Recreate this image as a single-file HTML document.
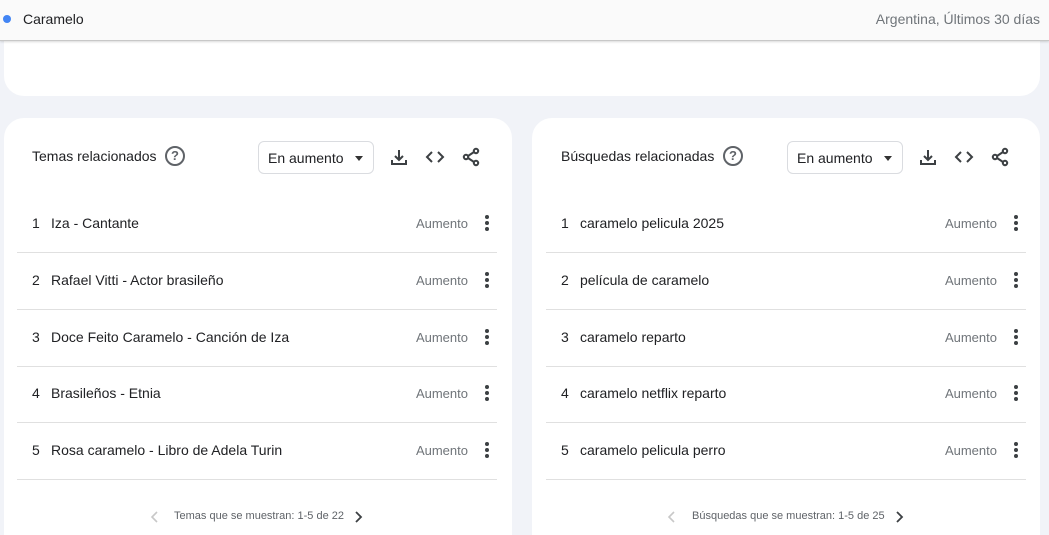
<!DOCTYPE html>
<html><head><meta charset="utf-8"><style>
*{margin:0;padding:0;box-sizing:border-box}
html,body{width:1049px;height:535px;overflow:hidden}
body{background:#f1f3f8;font-family:"Liberation Sans",Arial,sans-serif;color:#202124;position:relative}
.top{position:absolute;left:0;top:0;width:1049px;height:41px;background:#fafafa;border-bottom:1px solid #c8c8c8;box-shadow:0 1px 2px rgba(0,0,0,.15);z-index:2}
.top .dot{position:absolute;left:3px;top:15px;width:8px;height:8px;border-radius:50%;background:#4285f4}
.top .t{position:absolute;left:23px;top:11px;font-size:14px}
.top .r{position:absolute;right:9px;top:11px;font-size:14px;color:#70757a}
.hcard{position:absolute;left:4px;top:20px;width:1036px;height:76px;background:#fff;border-radius:0 0 20px 20px}
.card{position:absolute;top:118px;width:508px;height:417px;background:#fff;border-radius:20px 20px 0 0}
.title{position:absolute;top:148px;font-size:14px}
.help{position:absolute;top:146px;width:20px;height:20px;border:2px solid #5f6368;border-radius:50%;font-size:13px;font-weight:bold;color:#5f6368;text-align:center;line-height:16px}
.dd{position:absolute;top:141px;height:33px;border:1px solid #dadce0;border-radius:6px;font-size:14px;padding:8px 0 0 9px}
.dd:after{content:"";position:absolute;right:10px;top:14px;border:4px solid transparent;border-top:5px solid #333;border-bottom:0}
.ic{position:absolute;top:147px}
.row{position:absolute;height:57px;border-bottom:1px solid #e0e0e0;font-size:14px}
.row .n{position:absolute;left:15px;top:19px}
.row .l{position:absolute;left:34px;top:19px}
.row .a{position:absolute;right:29px;top:20px;font-size:13px;color:#70757a}
.row .m{position:absolute;right:8px;top:19px;width:4px}
.row .m i{display:block;width:4px;height:4px;border-radius:50%;background:#3c4043;margin-bottom:2px}
.pg{position:absolute;top:510px;font-size:11px;color:#5f6368}
</style></head><body>
<div class="top"><div class="dot"></div><div class="t">Caramelo</div><div class="r">Argentina, Últimos 30 días</div></div>
<div class="hcard"></div>

<div class="card" style="left:4px"></div>
<div class="card" style="left:532px"></div>

<div class="title" style="left:32px">Temas relacionados</div>
<div class="help" style="left:165px">?</div>
<div class="dd" style="left:258px;width:116px">En aumento</div>
<div class="title" style="left:561px">Búsquedas relacionadas</div>
<div class="help" style="left:723px">?</div>
<div class="dd" style="left:787px;width:116px">En aumento</div>

<svg class="ic" style="left:389px" width="20" height="20" viewBox="0 0 20 20" fill="none" stroke="#3c4043" stroke-width="2"><path d="M10 3v10M6 9l4 4 4-4M3 13v4h14v-4"/></svg>
<svg class="ic" style="left:425px" width="20" height="20" viewBox="0 0 20 20" fill="none" stroke="#3c4043" stroke-width="2"><path d="M7 5l-5 5 5 5M13 5l5 5-5 5"/></svg>
<svg class="ic" style="left:461px" width="20" height="20" viewBox="0 0 20 20" fill="none" stroke="#3c4043" stroke-width="2"><circle cx="15" cy="4" r="2.2"/><circle cx="5" cy="10" r="2.2"/><circle cx="15" cy="16" r="2.2"/><path d="M7 9l6-4M7 11l6 4"/></svg>
<svg class="ic" style="left:918px" width="20" height="20" viewBox="0 0 20 20" fill="none" stroke="#3c4043" stroke-width="2"><path d="M10 3v10M6 9l4 4 4-4M3 13v4h14v-4"/></svg>
<svg class="ic" style="left:954px" width="20" height="20" viewBox="0 0 20 20" fill="none" stroke="#3c4043" stroke-width="2"><path d="M7 5l-5 5 5 5M13 5l5 5-5 5"/></svg>
<svg class="ic" style="left:990px" width="20" height="20" viewBox="0 0 20 20" fill="none" stroke="#3c4043" stroke-width="2"><circle cx="15" cy="4" r="2.2"/><circle cx="5" cy="10" r="2.2"/><circle cx="15" cy="16" r="2.2"/><path d="M7 9l6-4M7 11l6 4"/></svg>

<div class="row" style="left:17px;top:196px;width:480px"><span class="n">1</span><span class="l">Iza - Cantante</span><span class="a">Aumento</span><span class="m"><i></i><i></i><i></i></span></div>
<div class="row" style="left:17px;top:253px;width:480px"><span class="n">2</span><span class="l">Rafael Vitti - Actor brasileño</span><span class="a">Aumento</span><span class="m"><i></i><i></i><i></i></span></div>
<div class="row" style="left:17px;top:310px;width:480px"><span class="n">3</span><span class="l">Doce Feito Caramelo - Canción de Iza</span><span class="a">Aumento</span><span class="m"><i></i><i></i><i></i></span></div>
<div class="row" style="left:17px;top:366px;width:480px"><span class="n">4</span><span class="l">Brasileños - Etnia</span><span class="a">Aumento</span><span class="m"><i></i><i></i><i></i></span></div>
<div class="row" style="left:17px;top:423px;width:480px"><span class="n">5</span><span class="l">Rosa caramelo - Libro de Adela Turin</span><span class="a">Aumento</span><span class="m"><i></i><i></i><i></i></span></div>

<div class="row" style="left:546px;top:196px;width:480px"><span class="n">1</span><span class="l">caramelo pelicula 2025</span><span class="a">Aumento</span><span class="m"><i></i><i></i><i></i></span></div>
<div class="row" style="left:546px;top:253px;width:480px"><span class="n">2</span><span class="l">película de caramelo</span><span class="a">Aumento</span><span class="m"><i></i><i></i><i></i></span></div>
<div class="row" style="left:546px;top:310px;width:480px"><span class="n">3</span><span class="l">caramelo reparto</span><span class="a">Aumento</span><span class="m"><i></i><i></i><i></i></span></div>
<div class="row" style="left:546px;top:366px;width:480px"><span class="n">4</span><span class="l">caramelo netflix reparto</span><span class="a">Aumento</span><span class="m"><i></i><i></i><i></i></span></div>
<div class="row" style="left:546px;top:423px;width:480px"><span class="n">5</span><span class="l">caramelo pelicula perro</span><span class="a">Aumento</span><span class="m"><i></i><i></i><i></i></span></div>

<svg style="position:absolute;left:150px;top:511px" width="10" height="12" viewBox="0 0 10 12" fill="none" stroke="#c8c8c8" stroke-width="1.6"><path d="M7 1L2 6l5 5"/></svg>
<div class="pg" style="left:174px">Temas que se muestran: 1-5 de 22</div>
<svg style="position:absolute;left:353px;top:511px" width="10" height="12" viewBox="0 0 10 12" fill="none" stroke="#3c4043" stroke-width="1.8"><path d="M3 1l5 5-5 5"/></svg>
<svg style="position:absolute;left:667px;top:511px" width="10" height="12" viewBox="0 0 10 12" fill="none" stroke="#c8c8c8" stroke-width="1.6"><path d="M7 1L2 6l5 5"/></svg>
<div class="pg" style="left:692px">Búsquedas que se muestran: 1-5 de 25</div>
<svg style="position:absolute;left:894px;top:511px" width="10" height="12" viewBox="0 0 10 12" fill="none" stroke="#3c4043" stroke-width="1.8"><path d="M3 1l5 5-5 5"/></svg>
</body></html>
